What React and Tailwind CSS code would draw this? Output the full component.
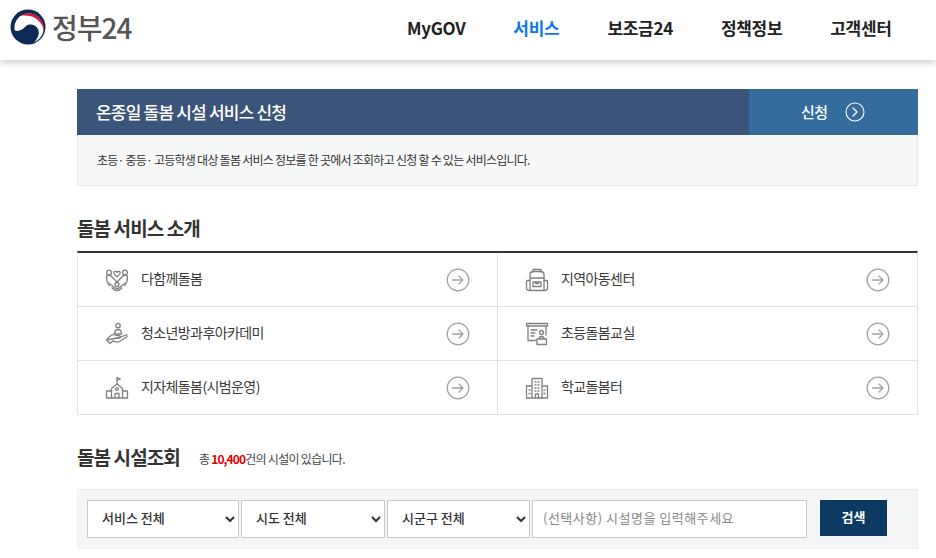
import React from "react";

const S = { fill: "none", stroke: "#808080", strokeWidth: 1.3, strokeLinejoin: "round", strokeLinecap: "round" };

function Family() {
  return (
    <svg width="24" height="24" viewBox="0 0 24 24" {...S}>
      <path d="M12 4.500C10.800 2.600 8.600 3.300 8.800 5c.2 1.600 1.800 2.800 3.200 3.800 1.400-1 3-2.200 3.200-3.800.2-1.700-2-2.400-3.200-.5z" />
      <circle cx="4" cy="4.500" r="2.400" />
      <circle cx="20" cy="4.500" r="2.400" />
      <path d="M1.500 9c0-1.500 1-2 2.500-2s2.300.8 3 2l5 5 5-5c.7-1.200 1.500-2 3-2s2.500.5 2.500 2c0 3.500-1 6.500-3 8.500" />
      <path d="M1.500 9c0 3.500 1 6.500 3 8.500" />
      <circle cx="12" cy="16.500" r="2" />
      <path d="M4 15c1 1.500 3 2.500 4.500 4 1 1 2 1.500 3.500 1.500s2.500-.5 3.500-1.500c1.500-1.500 3.500-2.500 4.500-4" />
      <path d="M7 20c1.500 1.500 3 2.500 5 2.500s3.500-1 5-2.500" />
    </svg>
  );
}
function HandPerson() {
  return (
    <svg width="24" height="24" viewBox="0 0 24 24" {...S}>
      <circle cx="13" cy="3.500" r="2.200" />
      <path d="M9.500 12c0-2.500 1-4.500 3.500-4.500s3.500 2 3.500 4.500z" />
      <path d="M2 17l4-3.500c1.500-1 3-1 4.500-.5l4.500 1c1 .5.7 2-.7 2H11" />
      <path d="M15 15.500l5.500-2.500c1.500-.5 2.300 1 1 2l-7 4.500c-1.500.7-3 .7-4.500.2l-2.500-.7L5 21.500 1.500 18z" />
    </svg>
  );
}
function School() {
  return (
    <svg width="24" height="24" viewBox="0 0 24 24" {...S}>
      <path d="M12 8V1.500l3.500 1.500L12 4.500" />
      <path d="M6.500 22v-9.500L12 8l5.500 4.500V22" />
      <path d="M6.500 15H1.500v7h21v-7h-5" />
      <circle cx="12" cy="13" r="1.400" />
      <path d="M10 22v-4.500h4V22" />
    </svg>
  );
}
function Backpack() {
  return (
    <svg width="24" height="24" viewBox="0 0 24 24" {...S}>
      <path d="M8 4V1.500h8V4" />
      <path d="M5 22.500V7c0-2 1.500-3.500 3.500-3.500h7c2 0 3.500 1.500 3.500 3.500v15.500z" />
      <path d="M5 10h14" />
      <path d="M8 14h8v4.500H8zM10.500 14v1.500h3V14" />
      <path d="M5 12.500H2.500c-.6 0-1 .4-1 1v7c0 1.200 1 2 3.500 2M19 12.500h2.500c.6 0 1 .4 1 1v7c0 1.200-1 2-3.500 2" />
    </svg>
  );
}
function Classroom() {
  return (
    <svg width="24" height="24" viewBox="0 0 24 24" {...S}>
      <path d="M1.500 1.500h21v2.500h-21z" />
      <path d="M3 4v14.500h8M21 4v9" />
      <path d="M6 8h6M6 11h4M6 14h3" />
      <circle cx="16.500" cy="10.500" r="2" />
      <path d="M12 22.500v-5.500h9.500v5.500zM14 17c0-1.500 1-2.500 2.500-2.500S19 15.500 19 17" />
    </svg>
  );
}
function Building() {
  return (
    <svg width="24" height="24" viewBox="0 0 24 24" {...S}>
      <path d="M7 22V2.500h10V22" />
      <path d="M7 10H1.500v12h21V10H17" />
      <path d="M10 6h1M13 6h1M10 9h1M13 9h1M10 12h1M13 12h1M10 15h1M13 15h1M10.500 22v-4h3v4M4 14h1M4 17.500h1M19 14h1M19 17.500h1" />
    </svg>
  );
}

function Arrow() {
  return (
    <svg width="24" height="24" viewBox="0 0 24 24" fill="none" stroke="#a3a3a3" strokeWidth="1.300" strokeLinecap="round" strokeLinejoin="round">
      <circle cx="12" cy="12" r="10.800" />
      <path d="M6.500 12h10.500M13 8l4 4-4 4" />
    </svg>
  );
}

function Row({ icon, label, right }) {
  return (
    <div className={"flex items-center h-full pl-[27px] pr-[27px] " + (right ? "" : "border-r border-[#e2e2e2]")}>
      <span className="w-[24px] h-[24px] shrink-0">{icon}</span>
      <span className="ml-[12px] mb-[2px] flex-1 text-[14px] text-[#3a3a3a] tracking-[-0.6px]">{label}</span>
      <Arrow />
    </div>
  );
}

const rows = [
  [<Family />, "다함께돌봄", <Backpack />, "지역아동센터"],
  [<HandPerson />, "청소년방과후아카데미", <Classroom />, "초등돌봄교실"],
  [<School />, "지자체돌봄(시범운영)", <Building />, "학교돌봄터"],
];

const selectCls = "h-[38px] bg-white border border-[#c8c8c8] pl-[10px] pb-[3px] text-[13px] font-medium text-[#333] outline-none";

export default function App() {
  return (
    <div className="w-[936px] h-[558px] overflow-hidden bg-white" style={{ fontFamily: '"Noto Sans CJK KR", "Noto Sans", sans-serif' }}>
      <header className="h-[60px] flex items-center bg-white shadow-[0_3px_7px_rgba(0,0,0,0.2)] relative">
        <div className="flex items-center ml-[10px] mb-[6px] w-[380px]">
          <svg width="36" height="36" viewBox="0 0 36 36">
            <circle cx="18" cy="18" r="17.500" fill="#0b2a55" />
            <path d="M4.500 21C3.500 11 10.500 4.500 18.500 4.500 27.500 4.500 33.500 11.500 33.500 19.500 33.500 25.500 30 30.500 24.500 33 28 29 29.500 25 28.500 21.500 27.500 17.500 23.500 15 19.500 15.500 15.500 16 14.500 19 12 20.500 9.500 22 6 22.500 4.500 21Z" fill="#fff" />
            <path d="M10 7C14 3.500 22 3 27.500 7 32 10.500 34.500 16 34 22 33 16 29.500 11.500 25 9 20.500 6.500 15 6 10 7Z" fill="#d6153c" />
          </svg>
          <span className="ml-[6px] text-[28px] leading-none text-[#555] font-medium tracking-[-1px]">정부24</span>
        </div>
        <nav className="absolute left-[407px] top-0 h-[56px] flex items-center gap-[48px] text-[17px] font-bold text-[#222] tracking-[-0.3px]">
          <span>MyGOV</span>
          <span className="text-[#0b78e8]">서비스</span>
          <span>보조금24</span>
          <span>정책정보</span>
          <span>고객센터</span>
        </nav>
      </header>

      <main className="w-[841px] ml-[77px] pt-[29px]">
        <div className="flex h-[46px] text-white">
          <div className="flex-1 bg-[#3a5579] flex items-center pl-[19px] text-[17px] font-medium tracking-[-0.8px]">온종일 돌봄 시설 서비스 신청</div>
          <div className="w-[169px] bg-[#336c9d] flex items-center pl-[52px] gap-[17px] text-[15px] font-medium">
            <span className="tracking-[-0.5px]">신청</span>
            <svg width="20" height="20" viewBox="0 0 20 20" fill="none" stroke="#fff" strokeWidth="1.100" strokeLinecap="round" strokeLinejoin="round">
              <circle cx="10" cy="10" r="9" />
              <path d="M8 6l4 4-4 4" strokeWidth="1.400" />
            </svg>
          </div>
        </div>
        <div className="h-[51px] bg-[#f7f9f9] border border-t-0 border-[#e6eaee] flex items-center pl-[19px] text-[12px] text-[#333] tracking-[-0.75px]">
          초등· 중등· 고등학생 대상 돌봄 서비스 정보를 한 곳에서 조회하고 신청 할 수 있는 서비스입니다.
        </div>

        <h2 className="mt-[27px] h-[30px] leading-[30px] text-[19px] font-bold text-[#333] tracking-[-0.9px]">돌봄 서비스 소개</h2>
        <div className="mt-[8px] border-t-2 border-[#333] border-x border-b border-x-[#e2e2e2] border-b-[#e2e2e2]">
          {rows.map((r, i) => (
            <div key={i} className={i < 2 ? "grid grid-cols-[420px_1fr] h-[54px] border-b border-[#e2e2e2]" : "grid grid-cols-[420px_1fr] h-[53px]"}>
              <Row icon={r[0]} label={r[1]} />
              <Row icon={r[2]} label={r[3]} right />
            </div>
          ))}
        </div>

        <div className="mt-[27px] flex items-center h-[30px]">
          <h2 className="text-[19px] font-bold text-[#333] tracking-[-0.9px]">돌봄 시설조회</h2>
          <p className="ml-[19px] mt-[3px] text-[12px] text-[#444] tracking-[-0.7px]">
            총 <b className="text-[#e00000] font-bold tracking-[-0.9px]">10,400</b>건의 시설이 있습니다.
          </p>
        </div>

        <div className="mt-[17px] h-[60px] bg-[#f5f6f8] border border-[#eeeff1] flex items-start pl-[9px] pt-[10px]">
          <select className={"w-[152px] " + selectCls}>
            <option>서비스 전체</option>
          </select>
          <select className={"ml-[2px] w-[144px] " + selectCls}>
            <option>시도 전체</option>
          </select>
          <select className={"ml-[2px] w-[143px] " + selectCls}>
            <option>시군구 전체</option>
          </select>
          <input
            readOnly
            placeholder="(선택사항) 시설명을 입력해주세요"
            className="ml-[2px] w-[275px] h-[38px] bg-white border border-[#c8c8c8] pl-[10px] pb-[3px] text-[13px] tracking-[0.5px] text-[#777] placeholder:text-[#888] outline-none"
          />
          <button className="ml-[13px] w-[67px] h-[36px] pb-[3px] bg-[#0d3a63] text-white text-[13px] font-bold">검색</button>
        </div>
      </main>
    </div>
  );
}
